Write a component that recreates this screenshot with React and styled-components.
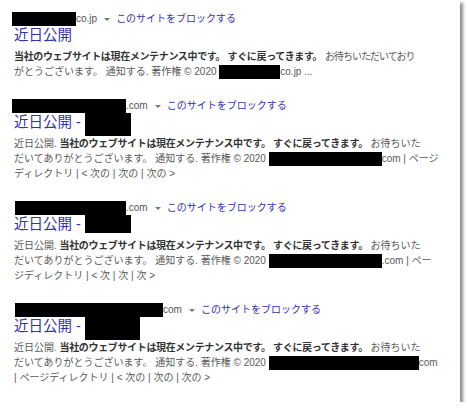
import React from "react";
import styled, { createGlobalStyle } from "styled-components";

const Global = createGlobalStyle`
  html, body {
    margin: 0;
    padding: 0;
    background: #ffffff;
  }
`;

const Card = styled.div`
  width: 460px;
  height: 402px;
  box-sizing: border-box;
  background: #fff;
  box-shadow: 3px 3px 3px #8c8c8c;
  padding: 12px 0 0 14px;
  font-family: "Liberation Sans", "Noto Sans CJK JP", sans-serif;
  display: flex;
  flex-direction: column;
  gap: 20px;
`;

const Result = styled.div`
  display: flex;
  flex-direction: column;
`;

const UrlRow = styled.div`
  height: 14px;
  line-height: 14px;
  font-size: 10px;
  color: #555;
  white-space: nowrap;
  display: flex;
  align-items: center;
`;

const Caret = styled.span`
  display: inline-block;
  width: 0;
  height: 0;
  border-left: 3px solid transparent;
  border-right: 3px solid transparent;
  border-top: 3.5px solid #777;
  margin: 1px 6px 0 7px;
`;

const BlockLink = styled.span`
  color: #3434b4;
`;

const Redact = styled.span`
  display: inline-block;
  background: #000;
  width: ${(p) => p.$w}px;
  height: ${(p) => p.$h || 14}px;
  margin-left: ${(p) => p.$ml || 0}px;
  vertical-align: ${(p) => p.$va || "middle"};
`;

const Title = styled.div`
  height: 18px;
  line-height: 18px;
  font-size: 14.5px;
  color: #3232b0;
  white-space: nowrap;
  margin-bottom: 5px;
`;

const Snippet = styled.div`
  font-size: 10px;
  line-height: 15px;
  color: #5a5a5a;
`;

const Line = styled.div`
  white-space: nowrap;
  height: 15px;
`;

const Strong = styled.b`
  color: #333;
  font-weight: 700;
  letter-spacing: -0.35px;
`;

const Tight = styled.span`
  letter-spacing: -1px;
`;

const Url = ({ w, ml, tail }) => (
  <UrlRow>
    <Redact $w={w} $h={14} $ml={ml} />
    <span>{tail}</span>
    <Caret />
    <BlockLink>このサイトをブロックする</BlockLink>
  </UrlRow>
);

const Lead = () => (
  <Strong>当社のウェブサイトは現在メンテナンス中です。 すぐに戻ってきます。</Strong>
);

const App = () => (
  <>
    <Global />
    <Card>
      <Result>
        <Url w={64} ml={-2} tail="co.jp" />
        <Title>近日公開</Title>
        <Snippet>
          <Line>
            <Lead /> <Tight>お待ちいただいており</Tight>
          </Line>
          <Line>
            がとうございます。 通知する. 著作権 © 2020 <Redact $w={61} $h={14} />co.jp ...
          </Line>
        </Snippet>
      </Result>

      <Result>
        <Url w={114} ml={-2} tail=".com" />
        <Title>
          近日公開 - <Redact $w={46} $h={23} $va="top" />
        </Title>
        <Snippet>
          <Line>
            近日公開. <Lead /> お待ちいた
          </Line>
          <Line>
            だいてありがとうございます。 通知する. 著作権 © 2020 <Redact $w={113} $h={14} />com | ページ
          </Line>
          <Line>ディレクトリ | &lt; 次の | 次の | 次の &gt;</Line>
        </Snippet>
      </Result>

      <Result>
        <Url w={111} ml={1} tail=".com" />
        <Title>
          近日公開 - <Redact $w={46} $h={18} $va="top" />
        </Title>
        <Snippet>
          <Line>
            近日公開. <Lead /> お待ちいた
          </Line>
          <Line>
            だいてありがとうございます。 通知する. 著作権 © 2020 <Redact $w={113} $h={14} />.com | ペー
          </Line>
          <Line>ジディレクトリ | &lt; 次 | 次 | 次 &gt;</Line>
        </Snippet>
      </Result>

      <Result>
        <Url w={148} ml={1} tail="com" />
        <Title>
          近日公開 - <Redact $w={55} $h={23} $va="top" />
        </Title>
        <Snippet>
          <Line>
            近日公開. <Lead /> お待ちいた
          </Line>
          <Line>
            だいてありがとうございます。 通知する. 著作権 © 2020 <Redact $w={150} $h={14} />com
          </Line>
          <Line>| ページディレクトリ | &lt; 次の | 次の | 次の &gt;</Line>
        </Snippet>
      </Result>
    </Card>
  </>
);

export default App;
